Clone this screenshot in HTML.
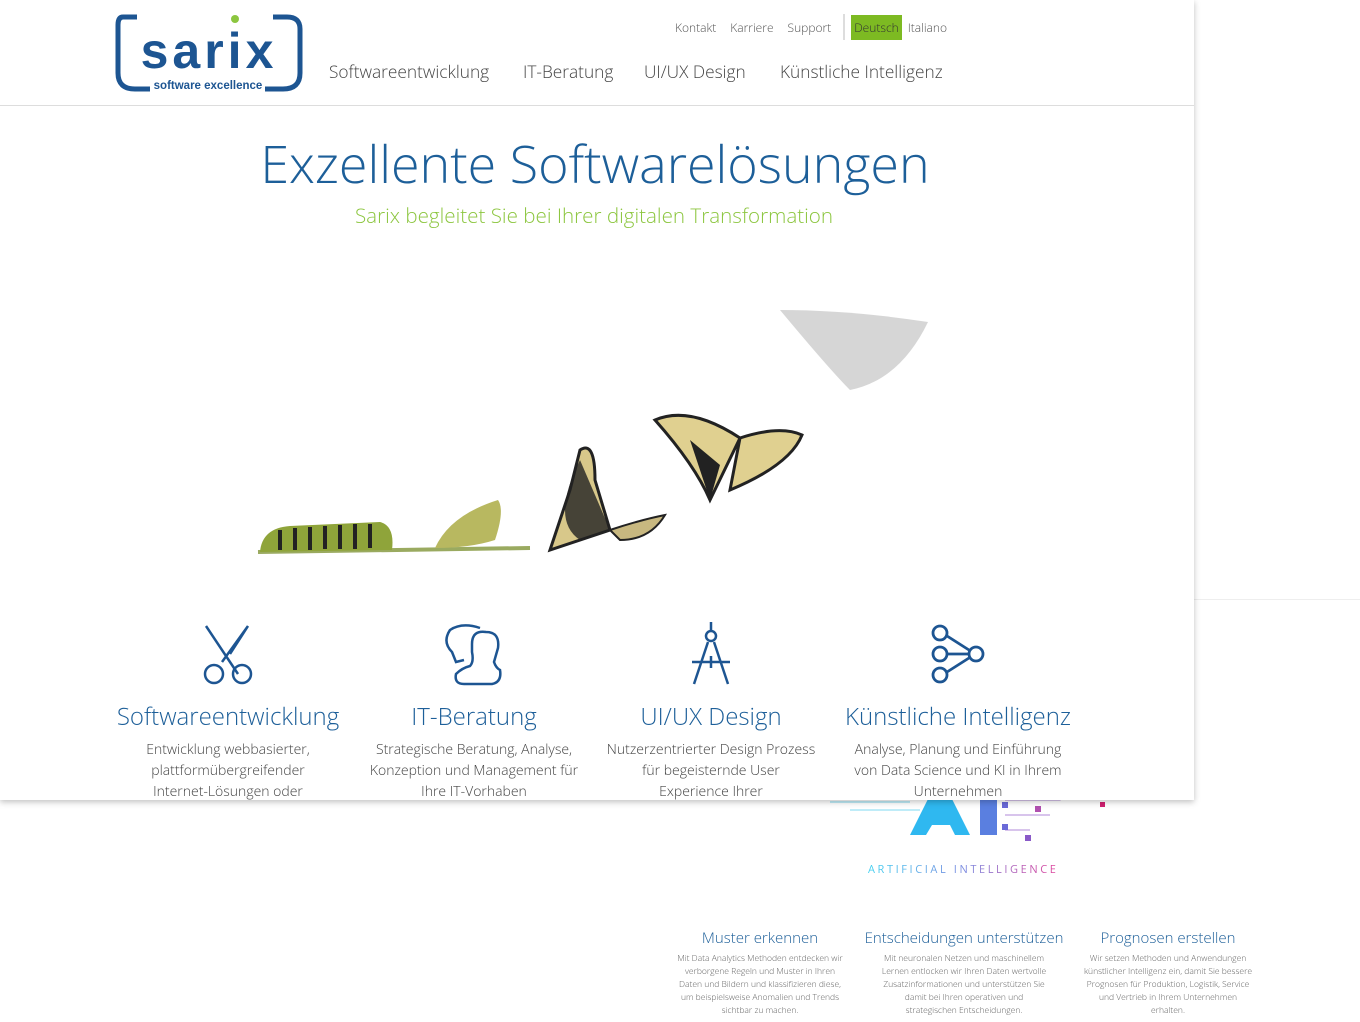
<!DOCTYPE html>
<html><head><meta charset="utf-8"><style>
*{margin:0;padding:0;box-sizing:border-box}
body{width:1360px;height:1022px;background:#fff;font-family:"Open Sans","Liberation Sans",sans-serif;font-weight:300;position:relative;overflow:hidden;color:#444}
.bgline{position:absolute;left:1194px;top:599px;width:166px;height:1px;background:#eee}
.box{position:absolute;left:0;top:0;width:1194px;height:800px;background:#fff;box-shadow:0 2px 6px rgba(0,0,0,.25);z-index:2;overflow:hidden}
.hdr{position:absolute;left:0;top:0;width:1194px;height:106px;border-bottom:1px solid #ddd}
.top{position:absolute;top:14px;left:675px;font-size:12px;color:#555;display:flex;align-items:center}
.top span{margin-right:14px}
.top .sep{width:2px;height:26px;background:#ddd;margin:0 6px 0 -2px}
.top .de{background:#7dba22;color:#333;padding:4px 3px;margin-right:6px}
.nav{position:absolute;top:61px;font-size:17.3px;color:#444}
.t{position:absolute;left:0;width:1194px;text-align:center}
.col{position:absolute;width:230px;text-align:center}
.col h2{font-weight:300;font-size:24px;color:#1d5f99;white-space:nowrap;margin-left:-30px;margin-right:-30px}
.col p{font-size:14px;line-height:21px;color:#444;margin:6px -20px 0;white-space:nowrap}
.b{position:absolute;width:180px;text-align:center}
.b h3{font-weight:300;font-size:15px;color:#1d5f99;white-space:nowrap;margin:0 -30px}
.b p{font-size:8.5px;line-height:13px;color:#666;margin:4px auto 0;width:170px}
</style></head><body>
<div class="bgline"></div>
<svg style="position:absolute;left:820px;top:790px" width="320" height="70">
<path d="M10 12 H90 M30 20 H100 M60 5 H110" stroke="#7fd8f0" stroke-width="1" fill="none"/>
<path d="M90 45 L110 5 H130 L150 45 H135 L130 35 H112 L106 45Z" fill="#2fb8f0"/>
<rect x="160" y="0" width="17" height="45" fill="#5a7fe0"/>
<path d="M185 10 H240 L260 0 M185 25 H230 M185 40 H210" stroke="#b08ad8" stroke-width="1" fill="none"/>
<rect x="182" y="12" width="6" height="6" fill="#6a6ad8"/><rect x="182" y="34" width="6" height="6" fill="#6a6ad8"/>
<rect x="205" y="45" width="6" height="6" fill="#8a5ac8"/><rect x="215" y="16" width="6" height="6" fill="#b050b0"/>
<rect x="280" y="12" width="5" height="5" fill="#d02070"/>
</svg>
<div style="position:absolute;left:868px;top:862px;font-size:11px;letter-spacing:2.6px;font-weight:400;background:linear-gradient(90deg,#3fd0f0,#7a8ae0,#e0409a);-webkit-background-clip:text;background-clip:text;color:transparent">ARTIFICIAL INTELLIGENCE</div>
<div class="b" style="left:670px;top:928px"><h3>Muster erkennen</h3><p>Mit Data Analytics Methoden entdecken wir verborgene Regeln und Muster in Ihren Daten und Bildern und klassifizieren diese, um beispielsweise Anomalien und Trends sichtbar zu machen.</p></div>
<div class="b" style="left:874px;top:928px"><h3>Entscheidungen unterstützen</h3><p>Mit neuronalen Netzen und maschinellem Lernen entlocken wir Ihren Daten wertvolle Zusatzinformationen und unterstützen Sie damit bei Ihren operativen und strategischen Entscheidungen.</p></div>
<div class="b" style="left:1078px;top:928px"><h3>Prognosen erstellen</h3><p>Wir setzen Methoden und Anwendungen künstlicher Intelligenz ein, damit Sie bessere Prognosen für Produktion, Logistik, Service und Vertrieb in Ihrem Unternehmen erhalten.</p></div>

<div class="box">
<div class="hdr">
<svg style="position:absolute;left:115px;top:13px" width="188" height="80">
<path d="M22 4 H8 Q3 4 3 12 V60 Q3 76 20 76 H35 M158 4 H172 Q185 4 185 16 V60 Q185 76 168 76 H150" stroke="#1d5592" stroke-width="5" fill="none"/>
<circle cx="120" cy="6" r="4" fill="#8cc63f"/>
<text x="94" y="55" text-anchor="middle" font-family="Liberation Sans" font-weight="bold" font-size="50" fill="#1d5592" letter-spacing="4">sarix</text>
<text x="93" y="76" text-anchor="middle" font-family="Liberation Sans" font-weight="bold" font-size="11.5" fill="#1d5592">software excellence</text>
</svg>
<div class="top"><span>Kontakt</span><span>Karriere</span><span>Support</span><div class="sep"></div><span class="de">Deutsch</span><span>Italiano</span></div>
<div class="nav" style="left:329px">Softwareentwicklung</div>
<div class="nav" style="left:523px">IT-Beratung</div>
<div class="nav" style="left:644px">UI/UX Design</div>
<div class="nav" style="left:780px">Künstliche Intelligenz</div>
</div>
<div class="t" style="top:128px;font-size:52px;color:#1d5f99;left:-2px">Exzellente Softwarelösungen</div>
<div class="t" style="top:202px;font-size:20.6px;color:#8cc63f;left:-3px">Sarix begleitet Sie bei Ihrer digitalen Transformation</div>
<svg style="position:absolute;left:250px;top:290px" width="700" height="290">
<path d="M8 262 L280 258" stroke="#9aaa60" stroke-width="4"/>
<path d="M10 262 Q12 238 40 236 L130 232 Q145 236 142 260Z" fill="#8fa43a"/>
<g stroke="#222" stroke-width="4"><path d="M30 240V260M45 238V260M60 237V260M75 236V259M90 235V259M105 234V259M120 234V258"/></g>
<path d="M185 258 Q200 225 248 210 Q255 220 245 250 Q220 258 185 258Z" fill="#b8b860"/>
<path d="M320 200 L330 160 Q345 150 345 190 L360 240 L300 260Z" fill="#d8c88a" stroke="#222" stroke-width="3"/>
<path d="M330 170 Q300 230 330 250 L360 240" fill="#222" opacity=".8"/>
<path d="M360 240 Q390 230 415 225 Q400 250 370 250Z" fill="#c8b880" stroke="#222" stroke-width="2"/>
<path d="M405 130 Q440 115 490 148 L460 210 Q445 175 405 130Z" fill="#e0d090" stroke="#222" stroke-width="3"/>
<path d="M490 148 Q530 135 552 145 Q540 175 480 200Z" fill="#e0d090" stroke="#222" stroke-width="3"/>
<path d="M440 150 L460 210 L470 175Z" fill="#222"/>
<path d="M530 20 Q600 20 678 32 Q650 90 600 100 Q580 80 530 20Z" fill="#bbb" opacity=".6"/>
</svg>
<svg style="position:absolute;left:200px;top:622px" width="56" height="64" fill="none" stroke="#1d5592" stroke-width="2.5"><path d="M6 4 L38 52 M48 4 L30 32 M22 40 L48 4"/><circle cx="14" cy="52" r="9"/><circle cx="42" cy="52" r="9"/></svg>
<svg style="position:absolute;left:442px;top:622px" width="64" height="66" fill="none" stroke="#1d5592" stroke-width="2.5"><path d="M38 6 Q20 0 8 8 Q0 20 10 30 L14 40 L22 38"/><path d="M30 22 Q30 8 44 10 Q58 10 56 26 L52 40 Q54 46 58 48 Q60 60 50 62 H22 Q12 62 14 52 Q20 46 28 44 Q32 40 30 30Z"/></svg>
<svg style="position:absolute;left:690px;top:622px" width="44" height="64" fill="none" stroke="#1d5592" stroke-width="2.5"><path d="M21 0V8"/><circle cx="21" cy="14" r="5"/><path d="M18 20 L4 62 M24 20 L38 62 M2 40 H40 M21 34V46"/></svg>
<svg style="position:absolute;left:928px;top:624px" width="60" height="62" fill="none" stroke="#1d5592" stroke-width="2.8"><circle cx="12" cy="9" r="7"/><circle cx="12" cy="30" r="7"/><circle cx="12" cy="51" r="7"/><circle cx="48" cy="30" r="7"/><path d="M19 12 L41 26 M19 30 H41 M19 48 L41 34"/></svg>
<div class="col" style="left:113px;top:700px"><h2>Softwareentwicklung</h2><p>Entwicklung webbasierter,<br>plattformübergreifender<br>Internet-Lösungen oder</p></div>
<div class="col" style="left:359px;top:700px"><h2>IT-Beratung</h2><p>Strategische Beratung, Analyse,<br>Konzeption und Management für<br>Ihre IT-Vorhaben</p></div>
<div class="col" style="left:596px;top:700px"><h2>UI/UX Design</h2><p>Nutzerzentrierter Design Prozess<br>für begeisternde User<br>Experience Ihrer</p></div>
<div class="col" style="left:843px;top:700px"><h2>Künstliche Intelligenz</h2><p>Analyse, Planung und Einführung<br>von Data Science und KI in Ihrem<br>Unternehmen</p></div>
</div>
</body></html>
